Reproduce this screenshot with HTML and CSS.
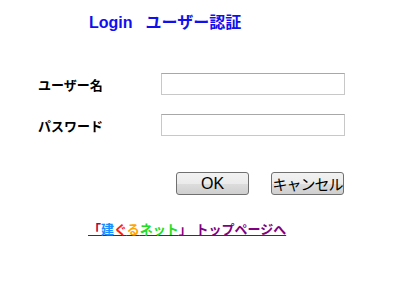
FILE: index.html
```html
<!DOCTYPE html>
<html lang="ja">
<head>
    <meta charset="UTF-8">
    <title>Login ユーザー認証</title>
    <link rel="stylesheet" href="styles.css">
</head>
<body>
    <div class="page">
        <h1 class="title">
            <span>Login</span>
            <span class="title-ja">ユーザー認証</span>
        </h1>

        <form class="login-form">
            <div class="row">
                <label for="user">ユーザー名</label>
                <input type="text" id="user">
            </div>
            <div class="row">
                <label for="pass">パスワード</label>
                <input type="password" id="pass">
            </div>
            <div class="buttons">
                <button type="button" class="ok">OK</button>
                <button type="button" class="cancel">キャンセル</button>
            </div>
        </form>

        <p class="back">
            <a href="#"><span class="c-br">「</span><span class="c-blue">建</span><span class="c-red">ぐ</span><span class="c-orange">る</span><span class="c-green">ネット</span>」 トップページへ</a>
        </p>
    </div>
</body>
</html>
```

FILE: styles.css
```css
* {
    box-sizing: border-box;
    margin: 0;
    padding: 0;
}

body {
    font-family: "Liberation Sans", "Noto Sans CJK JP", sans-serif;
    background: #fff;
    color: #000;
    width: 412px;
    height: 288px;
    overflow: hidden;
}

.page {
    padding-top: 12px;
}

.title {
    display: flex;
    gap: 13px;
    padding-left: 89px;
    font-size: 16px;
    font-weight: bold;
    color: #1010ee;
    line-height: 22px;
}

.title-ja {
    font-size: 16px;
}

.login-form {
    margin-top: 39px;
}

.row {
    display: flex;
    align-items: center;
    height: 22px;
    margin-bottom: 19px;
}

.row label {
    width: 123px;
    padding-left: 38px;
    font-size: 13px;
    font-weight: bold;
    box-sizing: content-box;
}

.row input {
    width: 184px;
    height: 22px;
    border: 1px solid #c8c8c8;
    border-top-color: #a8a8a8;
    background: #fff;
}

.buttons {
    display: flex;
    gap: 22px;
    padding-left: 176px;
    margin-top: 36px;
}

button {
    height: 23px;
    border: 1px solid #707070;
    border-radius: 3px;
    background: linear-gradient(#f2f2f2, #ebebeb 50%, #dddddd 51%, #cfcfcf);
    font-family: "Liberation Sans", "Noto Sans CJK JP", sans-serif;
    color: #000;
}

button.ok {
    width: 73px;
    font-size: 16px;
}

button.cancel {
    width: 73px;
    font-size: 15px;
    padding: 0;
    letter-spacing: -1px;
}

.back {
    margin-top: 26px;
    padding-left: 88px;
    font-size: 13px;
    font-weight: bold;
    line-height: 18px;
}

.back a {
    color: #800080;
}

.c-br {
    color: #b0003a;
}

.c-blue {
    color: #1a8cff;
}

.c-red {
    color: #ff1a1a;
}

.c-orange {
    color: #ffa500;
}

.c-green {
    color: #22dd22;
}
```
